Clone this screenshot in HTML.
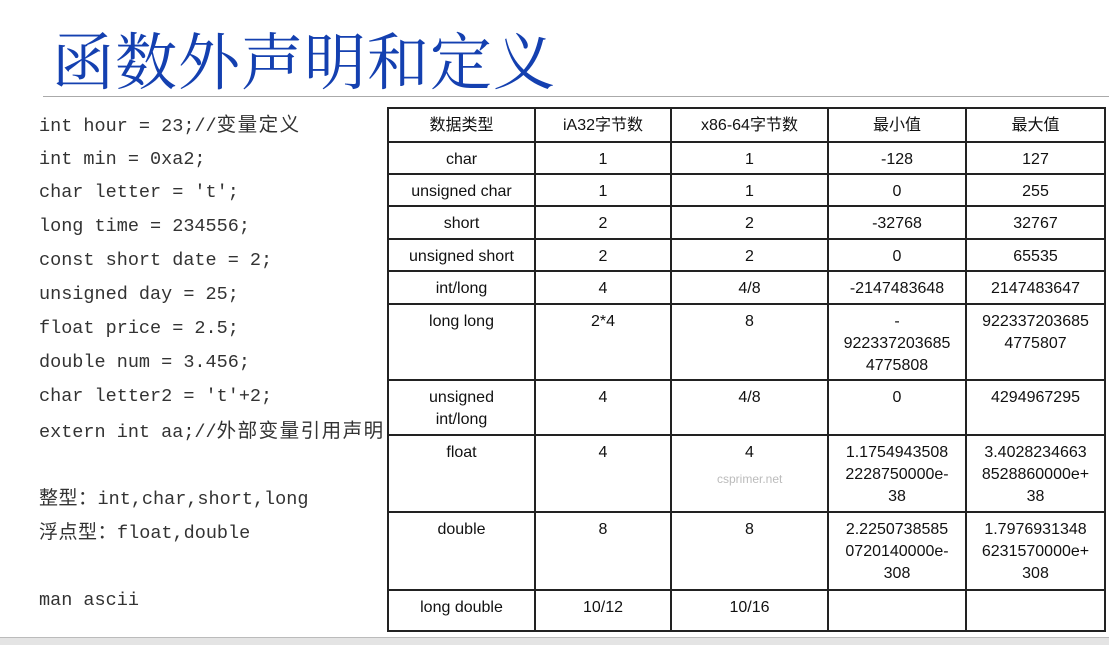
<!DOCTYPE html>
<html><head><meta charset="utf-8"><style>
body{margin:0;width:1109px;height:644px;background:#fff;position:relative;overflow:hidden;font-family:"Liberation Sans","Noto Sans CJK SC",sans-serif}
.title{position:absolute;left:52px;top:22px;font-family:"Noto Serif CJK SC","Liberation Serif",serif;font-size:62px;color:#1440b0;letter-spacing:1px;line-height:72px;white-space:nowrap}
.hr{position:absolute;left:43px;top:96px;width:1066px;height:1px;background:#aaa}
.code{position:absolute;left:39px;font-family:"Liberation Mono","Noto Sans CJK SC",monospace;font-size:18.5px;color:#333;white-space:nowrap;line-height:22px}
.c{letter-spacing:1.5px;font-size:19.5px}
.c2{letter-spacing:0.5px;font-size:19px}
table{position:absolute;left:387px;top:107px;border-collapse:collapse;font-size:16px;color:#111}
td{border:2px solid #222;text-align:center;vertical-align:top;line-height:22px;padding:6px 2px 0;box-sizing:border-box}
.wm{position:absolute;left:717px;top:472px;font-size:12px;color:#bbb}
.bot{position:absolute;left:0;top:637px;width:1109px;height:7px;background:#e4e4e4;border-top:1px solid #bbb}
</style></head><body>
<div class="title">函数外声明和定义</div>
<div class="hr"></div>
<div class="code" style="top:115px">int hour = 23;//<span class="c">变量定义</span></div>
<div class="code" style="top:149px">int min = 0xa2;</div>
<div class="code" style="top:182px">char letter = 't';</div>
<div class="code" style="top:216px">long time = 234556;</div>
<div class="code" style="top:250px">const short date = 2;</div>
<div class="code" style="top:284px">unsigned day = 25;</div>
<div class="code" style="top:318px">float price = 2.5;</div>
<div class="code" style="top:352px">double num = 3.456;</div>
<div class="code" style="top:386px">char letter2 = 't'+2;</div>
<div class="code" style="top:421px">extern int aa;//<span class="c">外部变量引用声明</span></div>
<div class="code" style="top:488px"><span class="c2">整型：</span>int,char,short,long</div>
<div class="code" style="top:522px"><span class="c2">浮点型：</span>float,double</div>
<div class="code" style="top:590px">man ascii</div>
<table>
<colgroup><col style="width:147px"><col style="width:136px"><col style="width:157px"><col style="width:138px"><col style="width:139px"></colgroup>
<tr style="height:34px"><td>数据类型</td><td>iA32字节数</td><td>x86-64字节数</td><td>最小值</td><td>最大值</td></tr>
<tr style="height:32px"><td>char</td><td>1</td><td>1</td><td>-128</td><td>127</td></tr>
<tr style="height:32px"><td>unsigned char</td><td>1</td><td>1</td><td>0</td><td>255</td></tr>
<tr style="height:33px"><td>short</td><td>2</td><td>2</td><td>-32768</td><td>32767</td></tr>
<tr style="height:32px"><td>unsigned short</td><td>2</td><td>2</td><td>0</td><td>65535</td></tr>
<tr style="height:33px"><td>int/long</td><td>4</td><td>4/8</td><td>-2147483648</td><td>2147483647</td></tr>
<tr style="height:76px"><td>long long</td><td>2*4</td><td>8</td><td>-<br>922337203685<br>4775808</td><td>922337203685<br>4775807</td></tr>
<tr style="height:55px"><td>unsigned<br>int/long</td><td>4</td><td>4/8</td><td>0</td><td>4294967295</td></tr>
<tr style="height:77px"><td>float</td><td>4</td><td>4</td><td>1.1754943508<br>2228750000e-<br>38</td><td>3.4028234663<br>8528860000e+<br>38</td></tr>
<tr style="height:78px"><td>double</td><td>8</td><td>8</td><td>2.2250738585<br>0720140000e-<br>308</td><td>1.7976931348<br>6231570000e+<br>308</td></tr>
<tr style="height:41px"><td>long double</td><td>10/12</td><td>10/16</td><td></td><td></td></tr>
</table>
<div class="wm">csprimer.net</div>
<div class="bot"></div>
</body></html>
